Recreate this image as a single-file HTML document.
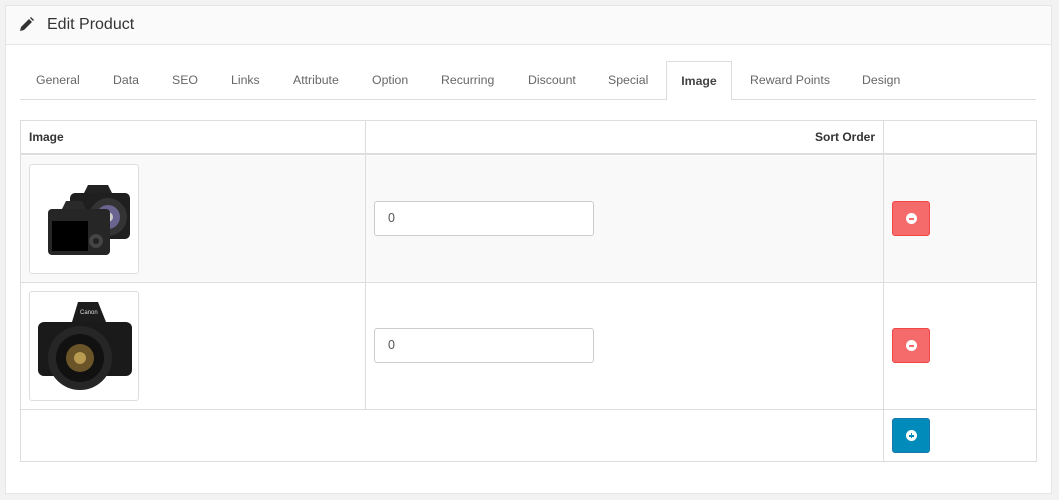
<!DOCTYPE html>
<html><head><meta charset="utf-8"><style>
*{box-sizing:border-box;margin:0;padding:0}
body{width:1059px;height:500px;background:#f2f2f2;font-family:"Liberation Sans",Arial,sans-serif;font-size:12px;color:#555;position:relative;overflow:hidden}
.abs{position:absolute}
.panel{left:5px;top:5px;width:1047px;height:489px;background:#fff;border:1px solid #e5e5e5}
.head{left:6px;top:6px;width:1045px;height:39px;background:#fafafa;border-bottom:1px solid #e5e5e5}
.head span{position:absolute;left:41px;top:10px;font-size:16px;color:#333}
.tabline{left:20px;top:99px;width:1016px;height:1px;background:#ddd}
.tab{top:73px;font-size:12.3px;color:#666}
.atab{left:666px;top:61px;width:66px;height:39px;background:#fff;border:1px solid #ddd;border-bottom:none;text-align:center;padding-top:12px;font-weight:bold;color:#444;font-size:12.3px}
.tbl{left:20px;top:120px;width:1017px;height:342px;border:1px solid #ddd}
.hl{background:#ddd}
.th{font-weight:bold;color:#333;top:130px;font-size:12px}
.thumb{width:110px;height:110px;border:1px solid #ddd;border-radius:3px;background:#fff;left:29px}
.inp{left:374px;width:220px;height:35px;border:1px solid #ccc;border-radius:3px;background:#fff;padding:9px 13px;font-size:12.5px;color:#555}
.btn{left:892px;width:38px;height:35px;border-radius:3px}
.red{background:#f56b6b;border:1px solid #f24545}
.blue{border:1px solid #1978ab;background:#008bba}
.ic{position:absolute;left:13px;top:11px;width:11px;height:11px;border-radius:50%;background:#fff}
</style></head><body>
<div class="abs panel"></div>
<div class="abs head">
<svg class="abs" style="left:13px;top:11px" width="15" height="15" viewBox="0 0 15 15"><path d="M1 14 L2 10 L10 2 L13 5 L5 13 Z" fill="#333"/><path d="M11 1 L12 0 L15 3 L14 4 Z" fill="#333"/></svg>
<span>Edit Product</span></div>
<div class="abs tab" style="left:36px">General</div>
<div class="abs tab" style="left:113px">Data</div>
<div class="abs tab" style="left:172px">SEO</div>
<div class="abs tab" style="left:231px">Links</div>
<div class="abs tab" style="left:293px">Attribute</div>
<div class="abs tab" style="left:372px">Option</div>
<div class="abs tab" style="left:441px">Recurring</div>
<div class="abs tab" style="left:528px">Discount</div>
<div class="abs tab" style="left:608px">Special</div>
<div class="abs tab" style="left:750px">Reward Points</div>
<div class="abs tab" style="left:862px">Design</div>
<div class="abs tabline"></div>
<div class="abs atab">Image</div>
<div class="abs tbl"></div>
<div class="abs" style="left:21px;top:156px;width:1015px;height:126px;background:#f9f9f9"></div>
<div class="abs hl" style="left:21px;top:153px;width:1015px;height:2px"></div>
<div class="abs hl" style="left:21px;top:282px;width:1015px;height:1px"></div>
<div class="abs hl" style="left:21px;top:409px;width:1015px;height:1px"></div>
<div class="abs hl" style="left:365px;top:121px;width:1px;height:288px"></div>
<div class="abs hl" style="left:883px;top:121px;width:1px;height:340px"></div>
<div class="abs th" style="left:29px">Image</div>
<div class="abs th" style="left:815px">Sort Order</div>
<div class="abs thumb" style="top:164px"><svg width="108" height="108" viewBox="0 0 108 108">
<rect x="40" y="28" width="60" height="46" rx="5" fill="#1f1f1f"/><path d="M54 28 L58 20 L78 20 L82 28 Z" fill="#222"/><circle cx="78" cy="52" r="19" fill="#333"/><circle cx="78" cy="52" r="12" fill="#6a6490"/><circle cx="78" cy="52" r="5" fill="#ccc"/>
<rect x="18" y="44" width="62" height="46" rx="4" fill="#262626"/><path d="M32 44 L36 36 L52 36 L56 44 Z" fill="#2a2a2a"/><rect x="22" y="56" width="36" height="30" fill="#000"/><circle cx="66" cy="76" r="7" fill="#444"/><circle cx="66" cy="76" r="3" fill="#222"/></svg></div>
<div class="abs thumb" style="top:291px"><svg width="108" height="108" viewBox="0 0 108 108">
<rect x="8" y="30" width="94" height="54" rx="6" fill="#1a1a1a"/><path d="M42 30 L48 10 L68 10 L76 30 Z" fill="#1c1c1c"/><text x="50" y="22" font-size="6" fill="#ddd" font-family="Liberation Sans">Canon</text>
<circle cx="50" cy="66" r="32" fill="#262626"/><circle cx="50" cy="66" r="24" fill="#111"/><circle cx="50" cy="66" r="14" fill="#6a5428"/><circle cx="50" cy="66" r="6" fill="#b89a50"/></svg></div>
<div class="abs inp" style="top:201px">0</div>
<div class="abs inp" style="top:328px">0</div>
<div class="abs btn red" style="top:201px"><div class="ic"><div style="position:absolute;left:3px;top:5px;width:5px;height:1.5px;background:#f56b6b"></div></div></div>
<div class="abs btn red" style="top:328px"><div class="ic"><div style="position:absolute;left:3px;top:5px;width:5px;height:1.5px;background:#f56b6b"></div></div></div>
<div class="abs btn blue" style="top:418px"><div class="ic"><div style="position:absolute;left:3px;top:5px;width:5px;height:1.5px;background:#008bba"></div><div style="position:absolute;left:4.75px;top:3px;width:1.5px;height:5px;background:#008bba"></div></div></div>
</body></html>
